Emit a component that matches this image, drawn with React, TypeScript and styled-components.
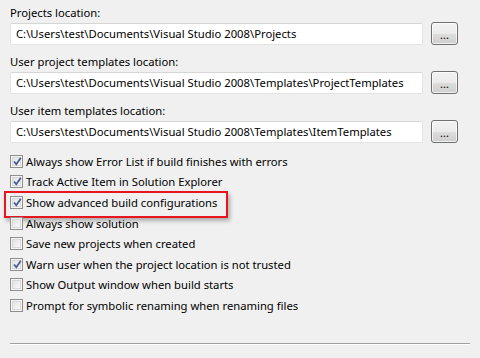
import React from "react";
import styled, { createGlobalStyle } from "styled-components";

const Global = createGlobalStyle`
  html, body { margin: 0; padding: 0; background: #f0f0f0; }
  body { font-family: "Noto Sans", "Open Sans", sans-serif; font-size: 11.25px; color: #000; }
`;

const Page = styled.div`
  width: 480px;
  height: 358px;
  box-sizing: border-box;
  padding: 4px 10px 0 10px;
  display: flex;
  flex-direction: column;
`;

const PathGroup = styled.div`
  display: flex;
  flex-direction: column;
  margin-bottom: 8px;
`;

const Label = styled.div`
  height: 18px;
  line-height: 18px;
`;

const PathRow = styled.div`
  display: flex;
  align-items: center;
  gap: 8px;
`;

const TextBox = styled.div`
  width: 413px;
  height: 22px;
  box-sizing: border-box;
  border: 1px solid #e3e3e3;
  border-top-color: #d6d6d6;
  background: #fff;
  padding-left: 5px;
  line-height: 20px;
  white-space: nowrap;
  border-radius: 2px;
`;

const BrowseButton = styled.div`
  width: 27px;
  height: 23px;
  box-sizing: border-box;
  border: 1px solid #707070;
  border-radius: 3px;
  background: linear-gradient(#f2f2f2 0%, #ebebeb 50%, #dddddd 51%, #cfcfcf 100%);
  box-shadow: inset 0 0 0 1px rgba(255,255,255,0.7);
  display: flex;
  align-items: center;
  justify-content: center;
  font-size: 11px;
  line-height: 1;
  padding-top: 2px;
`;

const CheckList = styled.div`
  display: flex;
  flex-direction: column;
  margin-top: 0;
`;

const CheckRow = styled.div`
  position: relative;
  display: flex;
  align-items: center;
  gap: 3px;
  height: 20.6px;
`;

const Highlight = styled.div`
  position: absolute;
  left: -6px;
  top: -1px;
  width: 224px;
  height: 27px;
  box-sizing: border-box;
  border: 2px solid #e8141e;
  box-shadow: 2px 3px 4px rgba(0,0,0,0.28);
  pointer-events: none;
`;

const Box = styled.span`
  width: 13px;
  height: 13px;
  box-sizing: border-box;
  border: 1px solid #8e8f8f;
  background: linear-gradient(135deg, #dcdcdc 0%, #ffffff 100%);
  box-shadow: inset 0 0 0 1px #f4f4f4, inset 0 0 0 2px #d8d8d8;
  flex-shrink: 0;
  position: relative;
`;

const Text = styled.span`
  white-space: nowrap;
`;

const Separator = styled.div`
  margin-top: auto;
  margin-bottom: 13px;
  height: 1px;
  width: 460px;
  background: #a0a0a0;
  border-bottom: 1px solid #ffffff;
`;

const Check = () => (
  <svg width="11" height="11" viewBox="0 0 11 11" style={{ position: "absolute", left: 1, top: 0 }}>
    <path d="M2 5.5 L4.3 8.2 L8.8 1.8" fill="none" stroke="#4a5f97" strokeWidth="1.8" />
  </svg>
);

const paths = [
  { label: "Projects location:", value: "C:\\Users\\test\\Documents\\Visual Studio 2008\\Projects" },
  { label: "User project templates location:", value: "C:\\Users\\test\\Documents\\Visual Studio 2008\\Templates\\ProjectTemplates" },
  { label: "User item templates location:", value: "C:\\Users\\test\\Documents\\Visual Studio 2008\\Templates\\ItemTemplates" },
];

const options = [
  { text: "Always show Error List if build finishes with errors", checked: true },
  { text: "Track Active Item in Solution Explorer", checked: true },
  { text: "Show advanced build configurations", checked: true, highlight: true },
  { text: "Always show solution", checked: false },
  { text: "Save new projects when created", checked: false },
  { text: "Warn user when the project location is not trusted", checked: true },
  { text: "Show Output window when build starts", checked: false },
  { text: "Prompt for symbolic renaming when renaming files", checked: false },
];

export default function App() {
  return (
    <>
      <Global />
      <Page>
        {paths.map((p) => (
          <PathGroup key={p.label}>
            <Label>{p.label}</Label>
            <PathRow>
              <TextBox>{p.value}</TextBox>
              <BrowseButton>...</BrowseButton>
            </PathRow>
          </PathGroup>
        ))}
        <CheckList>
          {options.map((o) => (
            <CheckRow key={o.text}>
              {o.highlight && <Highlight />}
              <Box>{o.checked && <Check />}</Box>
              <Text>{o.text}</Text>
            </CheckRow>
          ))}
        </CheckList>
        <Separator />
      </Page>
    </>
  );
}
